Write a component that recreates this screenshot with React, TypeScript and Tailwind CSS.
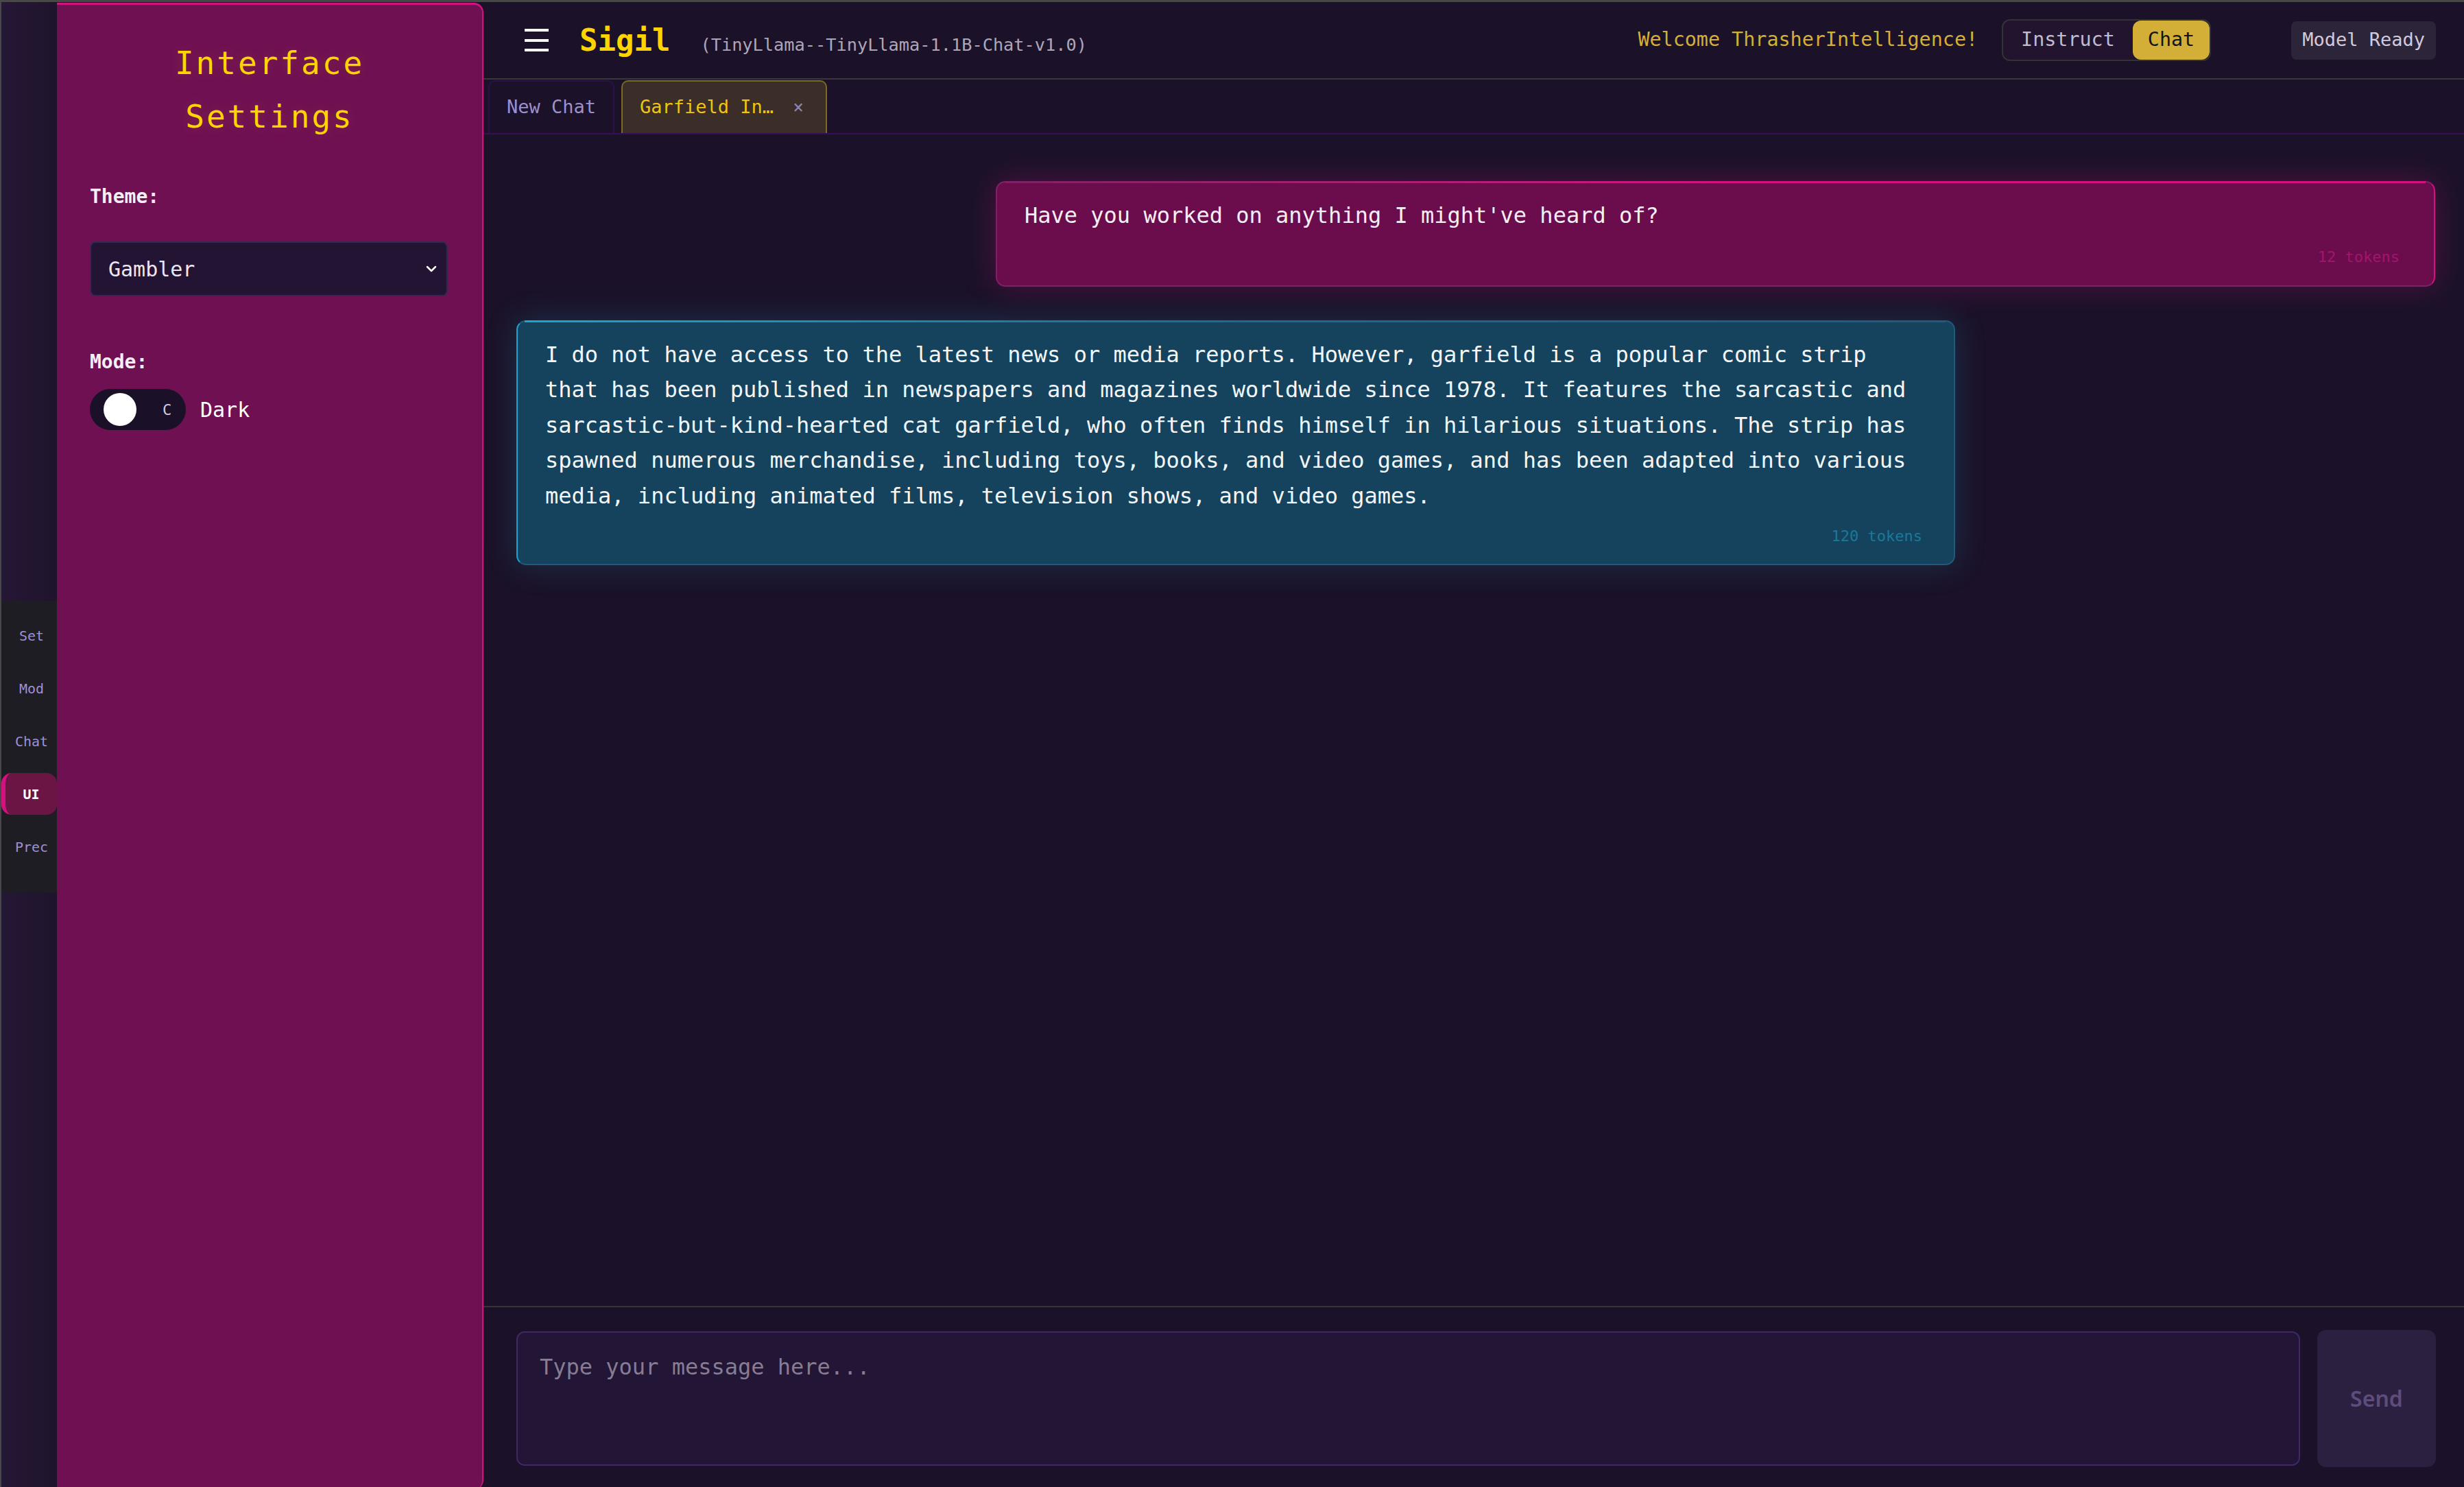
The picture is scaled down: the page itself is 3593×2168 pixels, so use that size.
import React from "react";

const mono = "font-['DejaVu_Sans_Mono',monospace]";

function NavItem({ label, active }: { label: string; active?: boolean }) {
  if (active) {
    return (
      <div className="flex h-[61px] items-center justify-center rounded-[15px] border-l-[6px] border-[#d4127f] bg-[#6b1545] text-[20px] font-bold text-white">
        {label}
      </div>
    );
  }
  return (
    <div className="flex h-[61px] items-center justify-center pl-[7px] text-[20px] text-[#9c90d8]">{label}</div>
  );
}

export default function App() {
  return (
    <div
      className={`flex h-[2168px] w-[3593px] overflow-hidden border-l-[2px] border-t-[3px] border-[#484848] bg-[#1b1229] ${mono}`}
    >
      {/* left strip */}
      <aside className="flex w-[81px] shrink-0 flex-col justify-center bg-gradient-to-r from-[#251736] to-[#1f142c] pt-[6px]">
        <nav className="flex flex-col gap-[16px] bg-[#1f1d24] pb-[36px] pt-[20px]">
          <NavItem label="Set" />
          <NavItem label="Mod" />
          <NavItem label="Chat" />
          <NavItem label="UI" active />
          <NavItem label="Prec" />
        </nav>
      </aside>

      {/* settings panel */}
      <section className="mt-px flex h-[2168px] w-[622px] shrink-0 flex-col rounded-r-[14px] border-r-2 border-t-[3px] border-[#d3127f] bg-[#6f1052] px-[48px] pt-[46px]">
        <h1 className="text-center text-[46px] leading-[78px] tracking-[3px] text-[#ffd400] [text-shadow:0_0_18px_rgba(255,212,0,0.15)]">
          Interface
          <br />
          Settings
        </h1>
        <div className="mt-[58px] text-[28px] font-semibold leading-[40px] text-[#f4eef6]">Theme:</div>
        <div className="mt-[45px] flex h-[80px] w-[522px] items-center justify-between rounded-[8px] border-2 border-[#372652] bg-[#221432] pl-[25px] pr-[12px]">
          <span className="text-[30px] text-[#ece6f2]">Gambler</span>
          <svg width="16" height="10" viewBox="0 0 16 10" className="mr-[2px]">
            <polyline points="2,2 8,8 14,2" fill="none" stroke="#ffffff" strokeWidth="2.5" strokeLinecap="round" strokeLinejoin="round" />
          </svg>
        </div>
        <div className="mt-[76px] text-[28px] font-semibold leading-[40px] text-[#f4eef6]">Mode:</div>
        <div className="mt-[19px] flex items-center gap-[21px]">
          <div className="flex h-[60px] w-[140px] items-center rounded-full bg-[#1a1128] pl-[20px]">
            <div className="h-[48px] w-[48px] rounded-full bg-white" />
            <span className="ml-[38px] text-[22px] text-[#d2cadf]">C</span>
          </div>
          <span className="text-[30px] font-medium text-white">Dark</span>
        </div>
      </section>

      {/* main */}
      <main className="flex min-w-0 flex-1 flex-col">
        {/* header */}
        <header className="flex h-[113px] shrink-0 items-center border-b-2 border-[#383838] pl-[60px] pr-[41px]">
          <div className="flex h-[35px] w-[35px] flex-col justify-between py-[1px]">
            <div className="h-[4px] w-[35px] bg-white" />
            <div className="h-[4px] w-[35px] bg-white" />
            <div className="h-[4px] w-[35px] bg-white" />
          </div>
          <div className="ml-[45px] flex items-baseline">
            <span className="text-[44px] font-bold text-[#ffd400]">Sigil</span>
            <span className="ml-[44px] text-[25.3px] text-[#aea6b8]">(TinyLlama--TinyLlama-1.1B-Chat-v1.0)</span>
          </div>
          <div className="ml-auto flex items-center">
            <span className="text-[28.4px] text-[#d4af37]">Welcome ThrasherIntelligence!</span>
            <div className="ml-[35px] flex h-[61px] items-center rounded-[12px] border-2 border-[#333333] bg-[#22132f]">
              <span className="px-[26px] text-[28.4px] text-[#c2bacb]">Instruct</span>
              <span className="flex h-[57px] items-center rounded-[12px] bg-[#d4af37] px-[22px] text-[28.4px] text-[#151515]">
                Chat
              </span>
            </div>
            <div className="ml-[117px] flex h-[56px] items-center rounded-[8px] bg-[#2c2438] px-[16px] text-[27px] text-[#d2cadb]">
              Model Ready
            </div>
          </div>
        </header>

        {/* tabs */}
        <div className="flex h-[80px] shrink-0 items-end gap-[10px] border-b-2 border-[#3a0e56] pl-[7px]">
          <div className="flex h-[77px] items-center rounded-t-[10px] border-2 border-b-0 border-[#2a1346] px-[25px] text-[27px] text-[#9d90cc]">
            New Chat
          </div>
          <div className="flex h-[77px] w-[300px] items-center rounded-t-[10px] border-2 border-b-0 border-[#7d6a22] bg-[#3b2d27] pl-[25px] text-[27px]">
            <span className="text-[#f1c40f]">Garfield In…</span>
            <span className="ml-[28px] text-[26px] text-[#8f86a8]">×</span>
          </div>
        </div>

        {/* messages */}
        <div className="flex min-h-0 flex-1 flex-col gap-[49px] pl-[48px] pr-[42px] pt-[68px]">
          <div className="relative ml-auto w-[2099px] rounded-[14px] border-2 border-[#7e2166] border-r-[#d3127f] bg-[#6b0d4d] px-[40px] pb-[26px] pt-[23px] shadow-[0_0_45px_rgba(214,18,127,0.28)]">
            <div className="absolute -top-[2px] left-[12px] right-[12px] h-[3px] bg-gradient-to-r from-[#7e2166] via-[#d3127f] to-[#d3127f]" />
            <p className="text-[32px] leading-[51.5px] text-[#f5eef5]">Have you worked on anything I might've heard of?</p>
            <div className="mt-[19px] pr-[10px] text-right text-[22px] leading-[30px] text-[#a3156a]">12 tokens</div>
          </div>

          <div className="relative w-[2098px] rounded-[14px] border-2 border-[#215a7b] border-l-[#1aa6cf] bg-[#15435e] px-[40px] pb-[25px] pt-[23px] shadow-[0_0_45px_rgba(31,163,196,0.22)]">
            <div className="absolute -top-[2px] left-[10px] right-[12px] h-[3px] bg-gradient-to-r from-[#1aa6cf] via-[#1e6a8e] to-[#215a7b]" />
            <p className="text-[32px] leading-[51.5px] text-[#f2f6f8]">
              I do not have access to the latest news or media reports. However, garfield is a popular comic strip that has been published in newspapers and magazines worldwide since 1978. It features the sarcastic and sarcastic-but-kind-hearted cat garfield, who often finds himself in hilarious situations. The strip has spawned numerous merchandise, including toys, books, and video games, and has been adapted into various media, including animated films, television shows, and video games.
            </p>
            <div className="mt-[18px] pr-[6px] text-right text-[22px] leading-[30px] text-[#1b7898]">120 tokens</div>
          </div>
        </div>

        {/* input */}
        <div className="flex h-[264px] shrink-0 items-center gap-[25px] border-t-2 border-[#353535] pb-[29px] pl-[48px] pr-[41px] pt-[33px]">
          <textarea
            className={`h-[196px] flex-1 resize-none rounded-[12px] border-2 border-[#41266a] bg-[#221535] px-[32px] py-[26px] text-[32px] leading-[48px] text-white outline-none placeholder:text-[#877d93] ${mono}`}
            placeholder="Type your message here..."
          />
          <button className="h-[200px] w-[173px] rounded-[13px] bg-[#2c2040] font-['Noto_Sans',sans-serif] text-[32px] font-semibold text-[#5e4c7c]">
            Send
          </button>
        </div>
      </main>
    </div>
  );
}
